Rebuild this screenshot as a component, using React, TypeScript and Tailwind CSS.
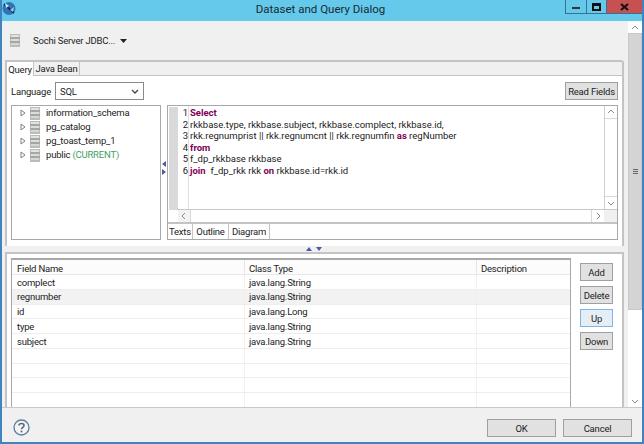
const font = { fontFamily: 'Roboto, "Noto Sans", sans-serif' };

function DbIcon() {
  return (
    <svg width="10" height="13" viewBox="0 0 10 13" className="shrink-0">
      <rect x="0" y="0" width="10" height="13" fill="#b9bcb8" />
      <rect x="1" y="1" width="8" height="2" fill="#e2e3e1" />
      <rect x="1" y="5" width="8" height="2" fill="#dcdddb" />
      <rect x="1" y="9" width="8" height="2" fill="#d6d7d5" />
      <rect x="0" y="3.5" width="10" height="1" fill="#8f928e" />
      <rect x="0" y="7.5" width="10" height="1" fill="#8f928e" />
    </svg>
  );
}

function AppIcon() {
  return (
    <svg width="14" height="15" viewBox="0 0 14 15" className="shrink-0">
      <circle cx="7" cy="7.5" r="6.5" fill="#2f75b5" />
      <path d="M2 3 L12 12" stroke="#0f2f55" strokeWidth="2" />
      <path d="M3 2 L7 5 L4 7 Z" fill="#d8e8f4" />
      <path d="M8 9 L12 6 L11 11 Z" fill="#9cc7e6" />
    </svg>
  );
}

function Btn({ label, w = "w-[33px]", h = "h-[18px]", active = false }: { label: string; w?: string; h?: string; active?: boolean }) {
  return (
    <div
      className={`${w} ${h} flex items-center justify-center whitespace-nowrap border pt-px text-[#222] ${
        active ? "border-[#7eb4ea] bg-[#e6eef5]" : "border-[#a0a0a0] bg-[#e1e1e1]"
      }`}
    >
      {label}
    </div>
  );
}

function Chevron({ dir }: { dir: "up" | "down" | "left" | "right" }) {
  const d = {
    up: "M1 5 L4 2 L7 5",
    down: "M1 3 L4 6 L7 3",
    left: "M5 1 L2 4 L5 7",
    right: "M3 1 L6 4 L3 7",
  }[dir];
  return (
    <svg width="8" height="8" viewBox="0 0 8 8">
      <path d={d} fill="none" stroke="#8a8a8a" strokeWidth="1" />
    </svg>
  );
}

const treeItems = ["information_schema", "pg_catalog", "pg_toast_temp_1"];

const rows = [
  ["complect", "java.lang.String"],
  ["regnumber", "java.lang.String"],
  ["id", "java.lang.Long"],
  ["type", "java.lang.String"],
  ["subject", "java.lang.String"],
  ["", ""],
  ["", ""],
  ["", ""],
  ["", ""],
];

function TreeRow({ children }: { children: React.ReactNode }) {
  return (
    <div className="flex h-[14px] items-center">
      <svg width="6" height="8" viewBox="0 0 6 8" className="ml-[8px] mr-[4px] shrink-0">
        <path d="M1 1 L5 4 L1 7 Z" fill="#fff" stroke="#808080" strokeWidth="1" />
      </svg>
      <DbIcon />
      <span className="ml-[6px] whitespace-nowrap">{children}</span>
    </div>
  );
}

const kw = "font-bold text-[#7f0055]";

const sqlLines = [
  <span className={kw}>Select</span>,
  <span>rkkbase.type, rkkbase.subject, rkkbase.complect, rkkbase.id,</span>,
  <span>rkk.regnumprist || rkk.regnumcnt || rkk.regnumfin <span className={kw}>as</span> regNumber</span>,
  <span className={kw}>from</span>,
  <span>f_dp_rkkbase rkkbase</span>,
  <span><span className={kw}>join</span>&nbsp; f_dp_rkk rkk <span className={kw}>on</span> rkkbase.id=rkk.id</span>,
];

export default function App() {
  return (
    <div style={font} className="flex h-[444px] w-[644px] flex-col overflow-hidden border-x-2 border-b-2 border-[#3f84bf] bg-[#f0f0f0] text-[9.5px] leading-none tracking-[-0.2px] text-[#222]">
      {/* title bar */}
      <div className="-mx-[2px] flex h-[21px] shrink-0 items-start bg-[#64c9ea] pl-[2px]">
        <div className="mt-[1px]"><AppIcon /></div>
        <div className="flex h-[19px] flex-1 items-center justify-center pl-[60px] text-[11.5px] tracking-normal text-[#1a2a33]">Dataset and Query Dialog</div>
        <div className="mr-[2px] flex h-[14px] items-stretch border-b border-[#3b6f8f]">
          <div className="flex w-[22px] items-center justify-center border-x border-[#3b6f8f]">
            <div className="mt-[2px] h-[2px] w-[8px] bg-[#333]" />
          </div>
          <div className="flex w-[20px] items-center justify-center border-r border-[#3b6f8f]">
            <div className="h-[8px] w-[9px] border-2 border-t-[3px] border-[#111]" />
          </div>
          <div className="flex w-[35px] items-center justify-center bg-[#c75050]">
            <svg width="9" height="8" viewBox="0 0 9 8"><path d="M1 1 L8 7 M8 1 L1 7" stroke="#111" strokeWidth="2" /></svg>
          </div>
        </div>
      </div>

      {/* scrolled body */}
      <div className="flex min-h-0 flex-1">
        <div className="flex min-w-0 flex-1 flex-col">
          <div className="flex h-[39px] shrink-0 items-center pl-[8px]">
            <DbIcon />
            <span className="ml-[13px] whitespace-nowrap pt-px">Sochi Server JDBC...</span>
            <svg width="7" height="4" viewBox="0 0 7 4" className="ml-[5px]"><path d="M0 0 H7 L3.5 4 Z" fill="#222" /></svg>
          </div>

          {/* query folder */}
          <div className="ml-[3px] mr-[4px] flex h-[186px] shrink-0 flex-col rounded-tr-[3px] border-2 border-b-0 border-[#c4c4c4]">
            <div className="flex h-[14px] shrink-0 border-b border-[#c4c4c4]">
              <div className="-mb-px flex w-[27px] items-center justify-center whitespace-nowrap border-r border-[#c4c4c4] bg-white pt-px">Query</div>
              <div className="flex w-[46px] items-center justify-center whitespace-nowrap border-r border-[#c4c4c4] pt-px">Java Bean</div>
            </div>
            <div className="flex min-h-0 flex-1 flex-col bg-white px-[4px] pt-[6px]">
              <div className="flex h-[18px] shrink-0 items-center">
                <span className="w-[44px] pt-px">Language</span>
                <div className="flex h-[18px] w-[89px] items-center justify-between border border-[#8a8a8a] pl-[4px] pr-[4px]">
                  <span className="pt-px">SQL</span>
                  <svg width="8" height="5" viewBox="0 0 8 5"><path d="M1 1 L4 4 L7 1" fill="none" stroke="#444" strokeWidth="1.3" /></svg>
                </div>
                <div className="ml-auto">
                  <Btn label="Read Fields" w="w-[53px]" />
                </div>
              </div>
              <div className="mt-[5px] flex h-[135px] shrink-0">
                <div className="w-[150px] shrink-0 border border-[#a8a8a8]">
                  {treeItems.map((t) => (
                    <TreeRow key={t}>{t}</TreeRow>
                  ))}
                  <TreeRow>
                    public <span className="text-[#3f9f5f]">(CURRENT)</span>
                  </TreeRow>
                </div>
                <div className="flex w-[6px] shrink-0 flex-col items-center justify-center gap-[2px] pb-[9px]">
                  <svg width="4" height="6" viewBox="0 0 4 6"><path d="M4 0 V6 L0 3 Z" fill="#4a5aa8" /></svg>
                  <svg width="4" height="6" viewBox="0 0 4 6"><path d="M0 0 V6 L4 3 Z" fill="#4a5aa8" /></svg>
                </div>
                <div className="flex min-w-0 flex-1 flex-col border border-[#a8a8a8]">
                  <div className="flex h-[118px] shrink-0 border-b-2 border-[#c4c4c4]">
                    <div className="ml-[1px] mt-[1px] h-[103px] w-[9px] shrink-0 bg-[#d9d9d9]" />
                    <div className="flex min-w-0 flex-1 flex-col">
                      <div className="flex min-h-0 flex-1 tracking-normal">
                        <div className="w-[10px] shrink-0 pt-px text-right">
                          {sqlLines.map((_, i) => (
                            <div key={i} className="flex h-[11.6px] items-center justify-end">{i + 1}</div>
                          ))}
                        </div>
                        <div className="min-w-0 flex-1 border-l border-[#e0e0e0] pl-px pt-px">
                          {sqlLines.map((line, i) => (
                            <div key={i} className="flex h-[11.6px] items-center whitespace-nowrap">{line}</div>
                          ))}
                        </div>
                        <div className="flex w-[13px] shrink-0 flex-col justify-between border-l border-[#d0d0d0]">
                          <div className="flex h-[13px] items-center justify-center border-b border-[#d8d8d8]"><Chevron dir="up" /></div>
                          <div className="flex h-[13px] items-center justify-center border-t border-[#d8d8d8]"><Chevron dir="down" /></div>
                        </div>
                      </div>
                      <div className="flex h-[13px] shrink-0 border-t border-[#c8c8c8]">
                        <div className="flex w-[13px] items-center justify-center border-r border-[#d8d8d8] bg-[#f3f3f3]"><Chevron dir="left" /></div>
                        <div className="flex-1" />
                        <div className="flex w-[13px] items-center justify-center border-l border-[#d8d8d8]"><Chevron dir="right" /></div>
                        <div className="w-[13px] bg-[#f0f0f0]" />
                      </div>
                    </div>
                  </div>
                  <div className="flex flex-1">
                    <div className="flex w-[25px] items-center justify-center border-r border-[#c4c4c4] pt-px">Texts</div>
                    <div className="flex w-[36px] items-center justify-center border-r border-[#c4c4c4] pt-px">Outline</div>
                    <div className="flex w-[41px] items-center justify-center border-r border-[#c4c4c4] pt-px">Diagram</div>
                  </div>
                </div>
              </div>
            </div>
          </div>

          {/* sash */}
          <div className="flex h-[6px] shrink-0 items-center justify-center gap-[4px] pr-[2px]">
            <svg width="6" height="4" viewBox="0 0 6 4"><path d="M0 4 H6 L3 0 Z" fill="#4a5aa8" /></svg>
            <svg width="6" height="4" viewBox="0 0 6 4"><path d="M0 0 H6 L3 4 Z" fill="#4a5aa8" /></svg>
          </div>

          {/* fields */}
          <div className="ml-[3px] mr-[4px] flex min-h-0 flex-1 border-2 border-b-0 border-[#c4c4c4] bg-white pl-[4px] pt-[4px]">
            <div className="w-[560px] shrink-0 border-x border-t-2 border-[#a8a8a8]">
              <div className="flex h-[15px] border-b border-[#e8e8e8] bg-[#fcfcfc]">
                <div className="w-[233px] border-r border-[#e5e5e5] pl-[5px] pt-[4px]">Field Name</div>
                <div className="w-[232px] border-r border-[#e5e5e5] pl-[4px] pt-[4px]">Class Type</div>
                <div className="flex-1 pl-[4px] pt-[4px]">Description</div>
              </div>
              {rows.map(([name, type], i) => (
                <div key={i} className={`flex h-[14.75px] border-b border-[#eeeeee] ${i === 1 ? "bg-[#f2f2f2]" : ""}`}>
                  <div className="flex w-[233px] items-center border-r border-[#f0f0f0] pl-[5px] pt-px">{name}</div>
                  <div className="flex w-[232px] items-center border-r border-[#f0f0f0] pl-[4px] pt-px">{type}</div>
                  <div className="flex-1" />
                </div>
              ))}
            </div>
            <div className="ml-[9px] flex flex-col gap-[5px] pt-[5px]">
              <Btn label="Add" />
              <Btn label="Delete" />
              <Btn label="Up" active />
              <Btn label="Down" />
            </div>
          </div>
        </div>

        {/* outer scrollbar */}
        <div className="flex w-[14px] shrink-0 flex-col bg-white pt-[1px]">
          <div className="flex h-[11px] shrink-0 items-center justify-center"><Chevron dir="up" /></div>
          <div className="flex h-[277px] shrink-0 items-center justify-center border border-[#c8c8c8] bg-[#d4d4d4]">
            <div className="flex flex-col gap-[1px]">
              <div className="h-px w-[5px] bg-[#666]" />
              <div className="h-px w-[5px] bg-[#666]" />
              <div className="h-px w-[5px] bg-[#666]" />
            </div>
          </div>
          <div className="flex-1" />
          <div className="flex h-[13px] shrink-0 items-center justify-center"><Chevron dir="down" /></div>
        </div>
      </div>

      {/* footer */}
      <div className="flex h-[35px] shrink-0 items-start border-t border-[#c8c8c8] pl-[11px] pr-[10px] pt-[11px]">
        <svg width="17" height="17" viewBox="0 0 17 17">
          <circle cx="8.5" cy="8.5" r="7.5" fill="#f4f4f4" stroke="#5f7f9f" strokeWidth="1.3" />
          <path d="M6 6.5 C6 3.8 11 3.8 11 6.5 C11 8.3 8.5 8.3 8.5 10.2" fill="none" stroke="#5a6a7a" strokeWidth="1.6" />
          <circle cx="8.5" cy="12.4" r="1" fill="#5a6a7a" />
        </svg>
        <div className="ml-auto flex gap-[7px]">
          <Btn label="OK" w="w-[69px]" />
          <Btn label="Cancel" w="w-[69px]" />
        </div>
      </div>
    </div>
  );
}
